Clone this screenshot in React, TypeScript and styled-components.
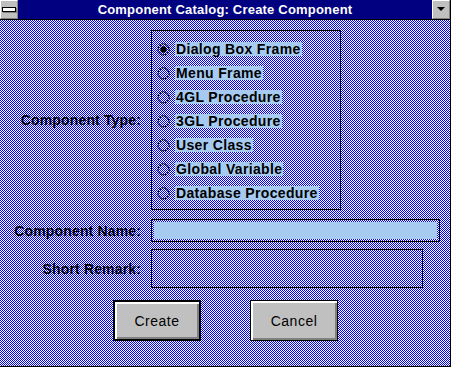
import React from "react";
import styled, { createGlobalStyle } from "styled-components";

const checker =
  "url(\"data:image/svg+xml,%3Csvg xmlns='http://www.w3.org/2000/svg' width='2' height='2' shape-rendering='crispEdges'%3E%3Crect width='2' height='2' fill='%23ffffff'/%3E%3Crect width='1' height='1' fill='%230000ff'/%3E%3Crect x='1' y='1' width='1' height='1' fill='%230000ff'/%3E%3C/svg%3E\")";

const GlobalStyle = createGlobalStyle`
  html, body {
    margin: 0;
    padding: 0;
    background: #ffffff;
  }
  body {
    font-family: "Liberation Sans", Arial, sans-serif;
  }
`;

const Window = styled.div`
  width: 451px;
  height: 367px;
  box-sizing: border-box;
  display: flex;
  flex-direction: column;
  border-right: 1px solid #000;
  border-bottom: 1px solid #000;
`;

const TitleBar = styled.div`
  height: 19px;
  flex: none;
  display: flex;
  align-items: stretch;
  background: #000080;
  border-bottom: 1px solid #000;
`;

const TitleText = styled.div`
  flex: 1;
  display: flex;
  align-items: center;
  justify-content: center;
  color: #fff;
  font-weight: bold;
  font-size: 13px;
  letter-spacing: 0.2px;
`;

const TitleButton = styled.div`
  width: 18px;
  box-sizing: border-box;
  background: #c0c0c0;
  display: flex;
  align-items: center;
  justify-content: center;
  border-top: 1px solid #fff;
  border-left: 1px solid #fff;
  border-right: 1px solid #808080;
  border-bottom: 1px solid #808080;
`;

const MenuBar = styled.div`
  width: 12px;
  height: 3px;
  background: #fff;
  border: 1px solid #000;
  box-shadow: 1px 1px 0 #808080;
`;

const Body = styled.div`
  flex: 1;
  background-color: #8080ff;
  background-image: ${checker};
  background-size: 2px 2px;
  background-repeat: repeat;
  image-rendering: pixelated;
  padding: 10px 0 0 0;
  display: flex;
  flex-direction: column;
`;

const FieldRow = styled.div<{ $gap?: number }>`
  display: grid;
  grid-template-columns: 151px 1fr;
  margin-top: ${(p) => p.$gap ?? 0}px;
`;

const Label = styled.div`
  align-self: center;
  text-align: right;
  padding-right: 10px;
  font-weight: bold;
  font-size: 14px;
  letter-spacing: 0.15px;
  color: #000;
  white-space: nowrap;
`;

const GroupBox = styled.div`
  width: 190px;
  height: 180px;
  box-sizing: border-box;
  border: 1px solid #000;
  padding: 6px 0 0 5px;
  display: flex;
  flex-direction: column;
`;

const RadioItem = styled.div`
  height: 24px;
  display: flex;
  align-items: center;
  gap: 5px;
`;

const RadioText = styled.span`
  background: #a6caf0;
  font-weight: bold;
  font-size: 14px;
  letter-spacing: 0.35px;
  line-height: 14px;
  padding: 0 1px 0 1px;
  color: #000;
`;

const TextInput = styled.div`
  width: 289px;
  height: 23px;
  box-sizing: border-box;
  border: 1px solid #000;
  padding: 2px;
  div {
    width: 100%;
    height: 100%;
    background: #a6caf0;
  }
`;

const RemarkBox = styled.div`
  width: 272px;
  height: 39px;
  box-sizing: border-box;
  border: 1px solid #000;
`;

const ButtonRow = styled.div`
  margin-top: 12px;
  display: flex;
  justify-content: center;
  gap: 49px;
  padding-left: 1px;
`;

const Button = styled.div<{ $default?: boolean }>`
  width: 88px;
  height: 41px;
  box-sizing: border-box;
  background: #c0c0c0;
  border: ${(p) => (p.$default ? "2px" : "1px")} solid #000;
  box-shadow: inset 2px 2px 0 #fff, inset -2px -2px 0 #808080;
  display: flex;
  align-items: center;
  justify-content: center;
  font-size: 14px;
  color: #000;
  letter-spacing: 0.5px;
`;

const Radio = ({ checked }: { checked?: boolean }) => (
  <svg width="13" height="13" viewBox="0 0 13 13">
    <circle
      cx="6.5"
      cy="6.5"
      r="5.5"
      fill="none"
      stroke="#000"
      strokeWidth="1.5"
      strokeDasharray="1.6 1"
    />
    {checked && <circle cx="6.5" cy="6.5" r="3.2" fill="#000" />}
  </svg>
);

const types = [
  "Dialog Box Frame",
  "Menu Frame",
  "4GL Procedure",
  "3GL Procedure",
  "User Class",
  "Global Variable",
  "Database Procedure",
];

const App = () => {
  return (
    <>
      <GlobalStyle />
      <Window>
        <TitleBar>
          <TitleButton>
            <MenuBar />
          </TitleButton>
          <TitleText>Component Catalog: Create Component</TitleText>
          <TitleButton>
            <svg width="8" height="5" viewBox="0 0 8 5">
              <polygon points="0,0 8,0 4,4" fill="#000" />
            </svg>
          </TitleButton>
        </TitleBar>
        <Body>
          <FieldRow>
            <Label>Component Type:</Label>
            <GroupBox>
              {types.map((t, i) => (
                <RadioItem key={t}>
                  <Radio checked={i === 0} />
                  <RadioText>{t}</RadioText>
                </RadioItem>
              ))}
            </GroupBox>
          </FieldRow>
          <FieldRow $gap={9}>
            <Label>Component Name:</Label>
            <TextInput>
              <div />
            </TextInput>
          </FieldRow>
          <FieldRow $gap={7}>
            <Label>Short Remark:</Label>
            <RemarkBox />
          </FieldRow>
          <ButtonRow>
            <Button $default>Create</Button>
            <Button>Cancel</Button>
          </ButtonRow>
        </Body>
      </Window>
    </>
  );
};

export default App;
